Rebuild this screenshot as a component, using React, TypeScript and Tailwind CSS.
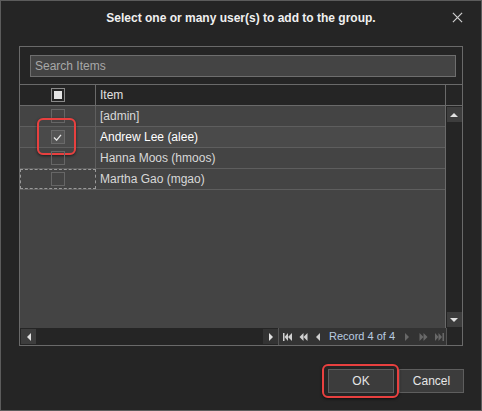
import React from 'react';

const rows = [
  { label: '[admin]', checked: false },
  { label: 'Andrew Lee (alee)', checked: true },
  { label: 'Hanna Moos (hmoos)', checked: false },
  { label: 'Martha Gao (mgao)', checked: false },
];

function Tri({ dir, className = '' }: { dir: 'up' | 'down' | 'left' | 'right'; className?: string }) {
  const pts = {
    up: '0,5 5,0 10,5',
    down: '0,0 10,0 5,5',
    left: '5,0 5,10 0,5',
    right: '0,0 0,10 5,5',
  }[dir];
  const box = dir === 'up' || dir === 'down' ? '0 0 10 5' : '0 0 5 10';
  const size = dir === 'up' || dir === 'down' ? 'w-[8px] h-[4px]' : 'w-[4px] h-[8px]';
  return (
    <svg viewBox={box} className={`${size} ${className}`} fill="currentColor">
      <polygon points={pts} />
    </svg>
  );
}

type NavKind = 'first' | 'prevPage' | 'prev' | 'next' | 'nextPage' | 'last';

function NavIcon({ kind, dim, className = '' }: { kind: NavKind; dim?: boolean; className?: string }) {
  const color = dim ? 'text-[#686868]' : 'text-[#d0d0d0]';
  const single = kind === 'prev' || kind === 'next';
  return (
    <svg
      viewBox={single ? '0 0 4 8' : '0 0 9 8'}
      className={`${single ? 'w-[4px]' : 'w-[9px]'} h-[8px] shrink-0 ${color} ${className}`}
      fill="currentColor"
    >
      {kind === 'first' && (
        <>
          <rect x="0" y="0" width="1.5" height="8" />
          <polygon points="5,0 5,8 1.5,4" />
          <polygon points="9,0 9,8 5,4" />
        </>
      )}
      {kind === 'prevPage' && (
        <>
          <polygon points="4.5,0 4.5,8 0.5,4" />
          <polygon points="8.5,0 8.5,8 4.5,4" />
        </>
      )}
      {kind === 'prev' && <polygon points="4,0 4,8 0,4" />}
      {kind === 'next' && <polygon points="0,0 0,8 4,4" />}
      {kind === 'nextPage' && (
        <>
          <polygon points="0.5,0 0.5,8 4.5,4" />
          <polygon points="4.5,0 4.5,8 8.5,4" />
        </>
      )}
      {kind === 'last' && (
        <>
          <polygon points="0,0 0,8 3.5,4" />
          <polygon points="3.5,0 3.5,8 7,4" />
          <rect x="7.5" y="0" width="1.5" height="8" />
        </>
      )}
    </svg>
  );
}

export default function App() {
  return (
    <div
      className="w-[482px] h-[411px] bg-[#252525] border border-[#5c5c5c] flex flex-col text-[#dcdcdc] text-[12px]"
      style={{ fontFamily: '"Liberation Sans", Arial, sans-serif' }}
    >
      {/* Title bar */}
      <div className="relative h-[34px] flex items-center justify-center">
        <span className="font-bold text-[12px] text-[#f0f0f0]">Select one or many user(s) to add to the group.</span>
        <svg viewBox="0 0 12 12" className="absolute right-[18px] top-[11px] w-[11px] h-[11px] text-[#d0d0d0]" stroke="currentColor" strokeWidth="1.3">
          <path d="M1 1 L11 11 M11 1 L1 11" />
        </svg>
      </div>

      {/* Grid */}
      <div className="ml-[18px] mt-[11px] w-[444px] h-[300px] border border-[#6a6a6a] flex flex-col">
        {/* Search */}
        <div className="h-[38px] flex items-center pl-[10px] pr-[6px] border-b border-[#6a6a6a]">
          <div className="w-full h-[22px] bg-[#444444] border border-[#6e6e6e] flex items-center px-[4px] text-[#a8a8a8]">
            Search Items
          </div>
        </div>

        {/* Header */}
        <div className="h-[21px] flex border-b border-[#6a6a6a]">
          <div className="w-[76px] border-r border-[#6a6a6a] flex items-center justify-center">
            <div className="w-[14px] h-[14px] border border-[#8a8a8a] flex items-center justify-center">
              <div className="w-[8px] h-[8px] bg-[#e6e6e6]" />
            </div>
          </div>
          <div className="flex-1 border-r border-[#6a6a6a] flex items-center pl-[4px] text-[#e0e0e0]">Item</div>
          <div className="w-[16px]" />
        </div>

        {/* Body */}
        <div className="flex-1 flex">
          <div className="flex-1 bg-[#444444] flex flex-col">
            {rows.map((r, i) => (
              <div
                key={r.label}
                className={`h-[21px] flex border-b border-[#5e5e5e] ${r.checked ? 'bg-[#4a4a4a]' : ''}`}
              >
                <div
                  className={`relative w-[76px] flex items-center justify-center border-r ${
                    i === 3 ? 'border border-dashed border-[#9a9a9a]' : 'border-[#5e5e5e]'
                  }`}
                >
                  <div
                    className={`w-[14px] h-[14px] border flex items-center justify-center ${
                      r.checked ? 'border-[#6a6a6a] bg-[#555555]' : 'border-[#666666]'
                    }`}
                  >
                    {r.checked && (
                      <svg viewBox="0 0 10 8" className="w-[9px] h-[7px] text-[#e8e8e8]" fill="none" stroke="currentColor" strokeWidth="1.5">
                        <path d="M1 4 L4 7 L9 1" />
                      </svg>
                    )}
                  </div>
                  {r.checked && (
                    <div className="absolute left-[17px] top-[-9px] w-[39px] h-[37px] rounded-[6px] border-[2px] border-[#e8403f] shadow-[0_1px_3px_rgba(0,0,0,0.6)]" />
                  )}
                </div>
                <div className={`flex-1 flex items-center pl-[4px] ${r.checked ? 'text-white' : 'text-[#d8d8d8]'}`}>
                  {r.label}
                </div>
              </div>
            ))}
          </div>
          {/* Vertical scrollbar */}
          <div className="w-[17px] border-l border-[#6a6a6a] flex flex-col items-center justify-between py-[1px]">
            <div className="w-[15px] h-[15px] bg-[#3d3d3d] flex items-center justify-center text-[#e0e0e0]">
              <Tri dir="up" />
            </div>
            <div className="w-[15px] h-[15px] bg-[#3d3d3d] flex items-center justify-center text-[#e0e0e0]">
              <Tri dir="down" />
            </div>
          </div>
        </div>

        {/* Bottom bar */}
        <div className="h-[17px] flex">
          <div className="w-[258px] flex items-center justify-between pl-[1px]">
            <div className="w-[15px] h-[15px] bg-[#3d3d3d] flex items-center justify-center text-[#e0e0e0]">
              <Tri dir="left" />
            </div>
            <div className="w-[15px] h-[15px] bg-[#333333] flex items-center justify-center text-[#e0e0e0]">
              <Tri dir="right" />
            </div>
          </div>
          <div className="w-[168px] bg-[#333333] border-l border-[#555555] flex items-center pl-[4px]">
            <NavIcon kind="first" />
            <NavIcon kind="prevPage" className="ml-[7px]" />
            <NavIcon kind="prev" className="ml-[8px]" />
            <span className="ml-[9px] w-[65px] text-[11px] text-[#b9cbe0] whitespace-nowrap">Record 4 of 4</span>
            <NavIcon kind="next" dim className="ml-[11px]" />
            <NavIcon kind="nextPage" dim className="ml-[10px]" />
            <NavIcon kind="last" dim className="ml-[7px]" />
          </div>
          <div className="flex-1 border-l border-[#555555]" />
        </div>
      </div>

      {/* Buttons */}
      <div className="flex justify-end gap-[5px] pr-[17px] mt-[23px]">
        <div className="relative">
          <div className="w-[66px] h-[24px] bg-[#3c3c3c] border border-[#5e5e5e] flex items-center justify-center text-[#e6e6e6]">
            OK
          </div>
          <div className="absolute -left-[6px] -top-[5px] w-[77px] h-[34px] rounded-[6px] border-[2px] border-[#e8403f] shadow-[0_1px_3px_rgba(0,0,0,0.6)]" />
        </div>
        <div className="w-[65px] h-[24px] bg-[#3c3c3c] border border-[#5e5e5e] flex items-center justify-center text-[#e6e6e6]">
          Cancel
        </div>
      </div>
    </div>
  );
}
